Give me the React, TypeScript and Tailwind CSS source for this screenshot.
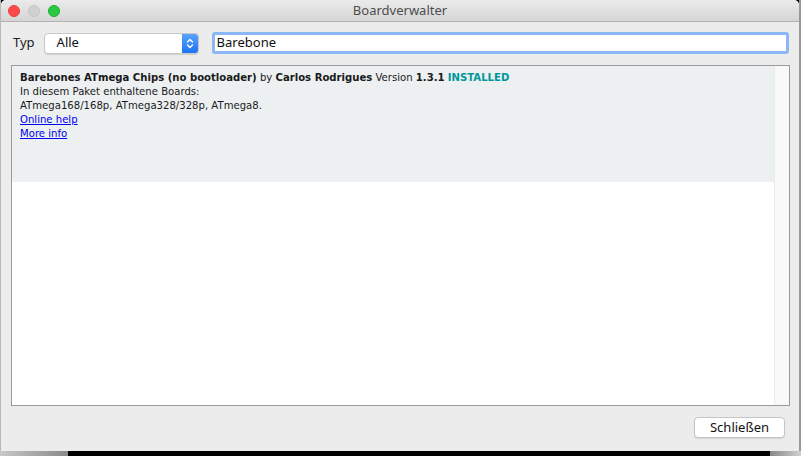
import React from "react";

export default function App() {
  const verdana = { fontFamily: '"DejaVu Sans", Verdana, sans-serif' };
  return (
    <div className="w-[801px] h-[456px] bg-black overflow-hidden flex flex-col" style={{ fontFamily: '"Noto Sans", "DejaVu Sans", sans-serif' }}>
      <div className="flex h-[451px]">
        <div className="w-[1px] bg-[#b8b8b8]" />
        <div className="w-[798px] h-[451px] bg-[#ececec] rounded-t-[5px] flex flex-col overflow-hidden">
          {/* title bar */}
          <div className="h-[22px] shrink-0 bg-gradient-to-b from-[#ebebeb] to-[#d5d5d5] border-b border-[#b3b3b3] flex items-center relative">
            <div className="flex items-center gap-[8px] pl-[7px]">
              <div className="w-[12px] h-[12px] rounded-full bg-[#fc4a4f] border border-[#e0443e]" />
              <div className="w-[12px] h-[12px] rounded-full bg-[#d0d0d0] border border-[#c4c4c4]" />
              <div className="w-[12px] h-[12px] rounded-full bg-[#28c940] border border-[#1dad2b]" />
            </div>
            <div className="absolute inset-0 flex items-center justify-center text-[13px] text-[#4d4d4d]">Boardverwalter</div>
          </div>
          {/* controls */}
          <div className="flex items-center mt-[10px] h-[22px]">
            <span className="ml-[12px] text-[13px] text-[#222]">Typ</span>
            <div className="ml-[9px] w-[155px] h-[21px] bg-white rounded-[4px] border border-[#c8c8c8] shadow-[0_1px_1px_rgba(0,0,0,0.12)] flex items-center justify-between overflow-hidden">
              <span className="pl-[12px] text-[13px] text-[#111]">Alle</span>
              <div className="w-[16px] h-full bg-gradient-to-b from-[#5aa3fb] to-[#1a73f1] flex items-center justify-center">
                <svg width="8" height="13" viewBox="0 0 8 13" fill="none" stroke="white" strokeWidth="1.4" strokeLinecap="round" strokeLinejoin="round">
                  <path d="M1.5 5 L4 2.5 L6.5 5" />
                  <path d="M1.5 8 L4 10.5 L6.5 8" />
                </svg>
              </div>
            </div>
            <div className="ml-[13px] w-[577px] h-[22px] bg-white border-[3px] border-[#8db7f4] rounded-[3px] flex items-center">
              <span className="pl-[2px] text-[13px] text-[#111]">Barebone</span>
            </div>
          </div>
          {/* list */}
          <div className="ml-[10px] mt-[11px] w-[779px] h-[341px] border border-[#9a9a9a] bg-white flex">
            <div className="flex-1 flex flex-col">
              <div className="h-[116px] bg-[#ecf0f1] pl-[8px] pt-[5px] text-[10.1px] leading-[14px] text-[#1a1a1a]" style={verdana}>
                <div>
                  <b>Barebones ATmega Chips (no bootloader)</b> by <b>Carlos Rodrigues</b> Version <b>1.3.1</b>{" "}
                  <b className="text-[#00979c]">INSTALLED</b>
                </div>
                <div>In diesem Paket enthaltene Boards:</div>
                <div>ATmega168/168p, ATmega328/328p, ATmega8.</div>
                <div><span className="text-[#0000ee] underline">Online help</span></div>
                <div><span className="text-[#0000ee] underline">More info</span></div>
              </div>
            </div>
            <div className="w-[15px] bg-[#f9f9f9] border-l border-[#ececec]" />
          </div>
          {/* footer */}
          <div className="flex justify-end mt-[11px] pr-[14px]">
            <div className="w-[91px] h-[21px] bg-white border border-[#c5c5c5] rounded-[4px] shadow-[0_1px_1px_rgba(0,0,0,0.1)] flex items-center justify-center text-[13px] text-[#111]">
              Schließen
            </div>
          </div>
        </div>
        <div className="w-[2px] bg-[#9a9a9a]" />
      </div>
      <div className="flex h-[5px]">
        <div className="w-[68px] bg-gradient-to-r from-[#c8c8c8] to-[#8a8a8a]" />
        <div className="flex-1 bg-black" />
        <div className="w-[31px] bg-gradient-to-r from-[#888] to-[#d0d0d0]" />
      </div>
    </div>
  );
}
